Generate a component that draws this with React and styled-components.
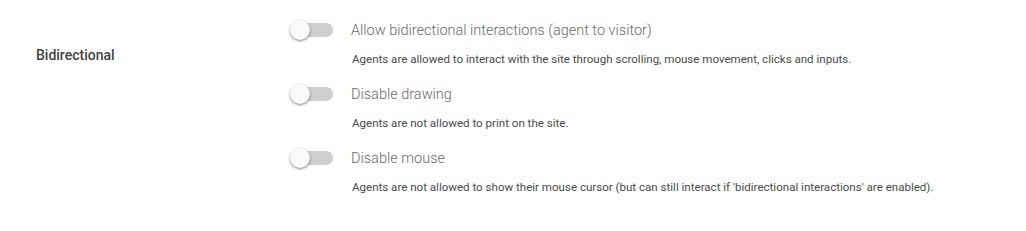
import React from "react";
import styled, { createGlobalStyle } from "styled-components";

const GlobalStyle = createGlobalStyle`
  body {
    margin: 0;
    background: #ffffff;
    font-family: Roboto, "Liberation Sans", sans-serif;
  }
`;

const Section = styled.div`
  display: flex;
  align-items: flex-start;
  padding: 18px 0 0 36px;
`;

const Label = styled.div`
  width: 254px;
  padding-top: 27px;
  font-size: 14px;
  line-height: 20px;
  font-weight: 500;
  color: #424242;
`;

const Options = styled.div`
  display: flex;
  flex-direction: column;
  gap: 14px;
`;

const Option = styled.div`
  display: flex;
  flex-direction: column;
  gap: 8px;
`;

const Header = styled.div`
  display: flex;
  align-items: center;
  height: 24px;
  gap: 18px;
`;

const Switch = styled.span`
  position: relative;
  display: inline-block;
  width: 43px;
  height: 24px;
  flex-shrink: 0;

  &::before {
    content: "";
    position: absolute;
    left: 3px;
    top: 5px;
    width: 40px;
    height: 14px;
    border-radius: 7px;
    background: #cfcfcf;
  }

  &::after {
    content: "";
    position: absolute;
    left: 0;
    top: 2px;
    width: 20px;
    height: 20px;
    border-radius: 50%;
    background: #fafafa;
    box-shadow: 0 1px 3px rgba(0, 0, 0, 0.4), 0 1px 1px rgba(0, 0, 0, 0.14);
  }
`;

const Title = styled.span`
  font-size: 14.5px;
  font-weight: 300;
  color: #6a6a6a;
`;

const Description = styled.div`
  margin-left: 62px;
  font-size: 11.55px;
  line-height: 18px;
  color: #4a4a4a;
`;

const options = [
  {
    title: "Allow bidirectional interactions (agent to visitor)",
    text: "Agents are allowed to interact with the site through scrolling, mouse movement, clicks and inputs.",
  },
  {
    title: "Disable drawing",
    text: "Agents are not allowed to print on the site.",
  },
  {
    title: "Disable mouse",
    text: "Agents are not allowed to show their mouse cursor (but can still interact if 'bidirectional interactions' are enabled).",
  },
];

export default function App() {
  return (
    <>
      <GlobalStyle />
      <Section>
        <Label>Bidirectional</Label>
        <Options>
          {options.map((o) => (
            <Option key={o.title}>
              <Header>
                <Switch />
                <Title>{o.title}</Title>
              </Header>
              <Description>{o.text}</Description>
            </Option>
          ))}
        </Options>
      </Section>
    </>
  );
}
